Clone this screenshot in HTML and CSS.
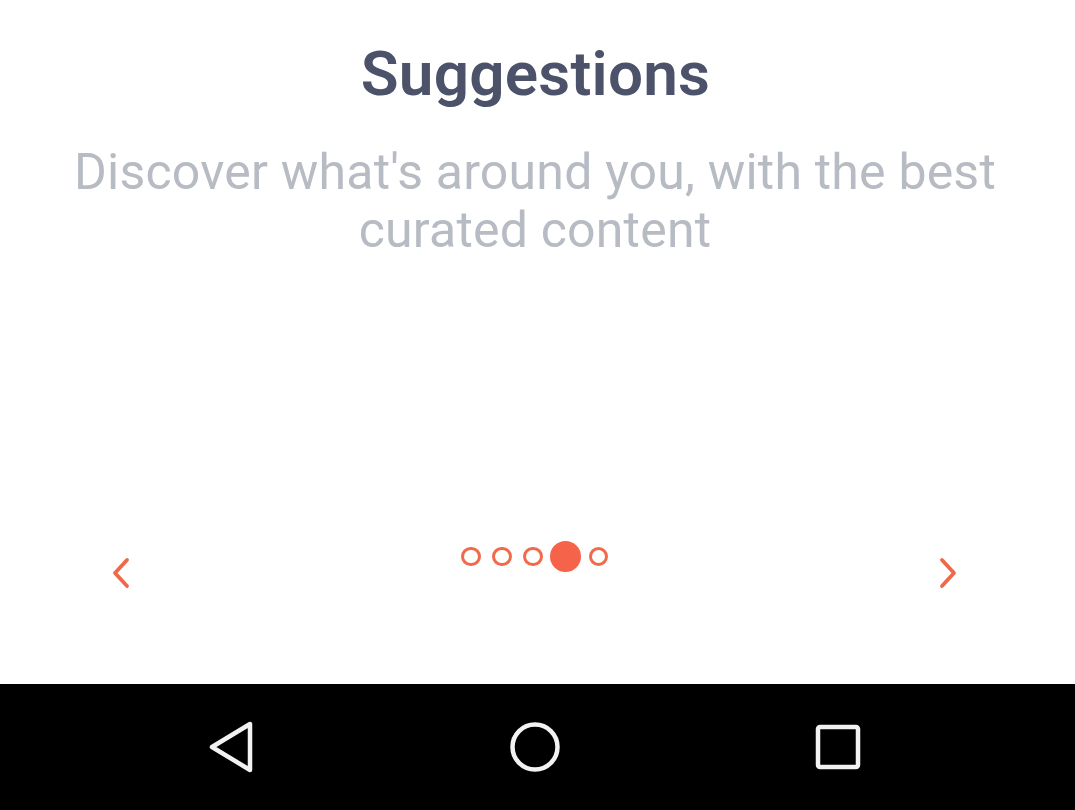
FILE: index.html
```html
<!DOCTYPE html>
<html>
<head>
<meta charset="utf-8">
<link rel="stylesheet" href="styles.css">
</head>
<body>
<div class="screen">
  <main class="main">
    <h1 class="title">Suggestions</h1>
    <p class="subtitle">Discover what's around you, with the best curated content</p>
    <div class="spacer"></div>
    <div class="controls">
      <svg class="chev" width="24" height="34" viewBox="0 0 24 34"><path d="M18 4 L6 17 L18 30" fill="none" stroke="#f06848" stroke-width="3.8" stroke-linecap="round" stroke-linejoin="round"/></svg>
      <div class="dots">
        <span class="dot"></span>
        <span class="dot"></span>
        <span class="dot"></span>
        <span class="dot active"></span>
        <span class="dot"></span>
      </div>
      <svg class="chev" width="24" height="34" viewBox="0 0 24 34"><path d="M6 4 L18 17 L6 30" fill="none" stroke="#f06848" stroke-width="3.8" stroke-linecap="round" stroke-linejoin="round"/></svg>
    </div>
  </main>
  <nav class="navbar">
    <svg width="50" height="54" viewBox="0 0 50 54"><path d="M44 4 L44 50 L6 27 Z" fill="none" stroke="#f2f2f2" stroke-width="4.5" stroke-linejoin="round"/></svg>
    <svg width="54" height="54" viewBox="0 0 54 54"><circle cx="27" cy="27" r="22.5" fill="none" stroke="#f2f2f2" stroke-width="4.5"/></svg>
    <svg width="50" height="50" viewBox="0 0 50 50"><rect x="5" y="5" width="40" height="40" rx="2" fill="none" stroke="#f2f2f2" stroke-width="4.5"/></svg>
  </nav>
</div>
</body>
</html>
```

FILE: styles.css
```css
html, body {
  margin: 0;
  padding: 0;
  background: #ffffff;
}
.screen {
  width: 1075px;
  height: 810px;
  display: flex;
  flex-direction: column;
  font-family: Roboto, "Liberation Sans", sans-serif;
}
.main {
  height: 684px;
  display: flex;
  flex-direction: column;
  align-items: center;
  padding-top: 36px;
  box-sizing: border-box;
}
.title {
  margin: 0 4px 0 0;
  font-size: 62px;
  font-weight: 600;
  line-height: 76px;
  color: #4b5269;
  letter-spacing: 0.25px;
}
.subtitle {
  margin: 31px 5px 0 0;
  width: 980px;
  text-align: center;
  font-size: 50px;
  font-weight: 400;
  line-height: 58px;
  color: #b7bbc3;
  letter-spacing: 0.2px;
}
.spacer {
  flex: 1;
}
.controls {
  width: 100%;
  box-sizing: border-box;
  padding: 0 115px 0 109px;
  display: flex;
  justify-content: space-between;
  align-items: flex-start;
  margin-bottom: 94px;
}
.chev {
  display: block;
  margin-top: 2px;
}
.dots {
  display: flex;
  align-items: center;
  gap: 11.5px;
  margin-top: -13px;
}
.dot {
  width: 13.5px;
  height: 13.5px;
  border: 3px solid #f26a4c;
  border-radius: 50%;
}
.dot.active {
  width: 31px;
  height: 31px;
  border: none;
  background: #f5644a;
  margin: 0 -4px;
}
.navbar {
  height: 126px;
  background: #000000;
  display: flex;
  align-items: center;
  justify-content: space-between;
  padding: 0 212px 0 206px;
}
```
